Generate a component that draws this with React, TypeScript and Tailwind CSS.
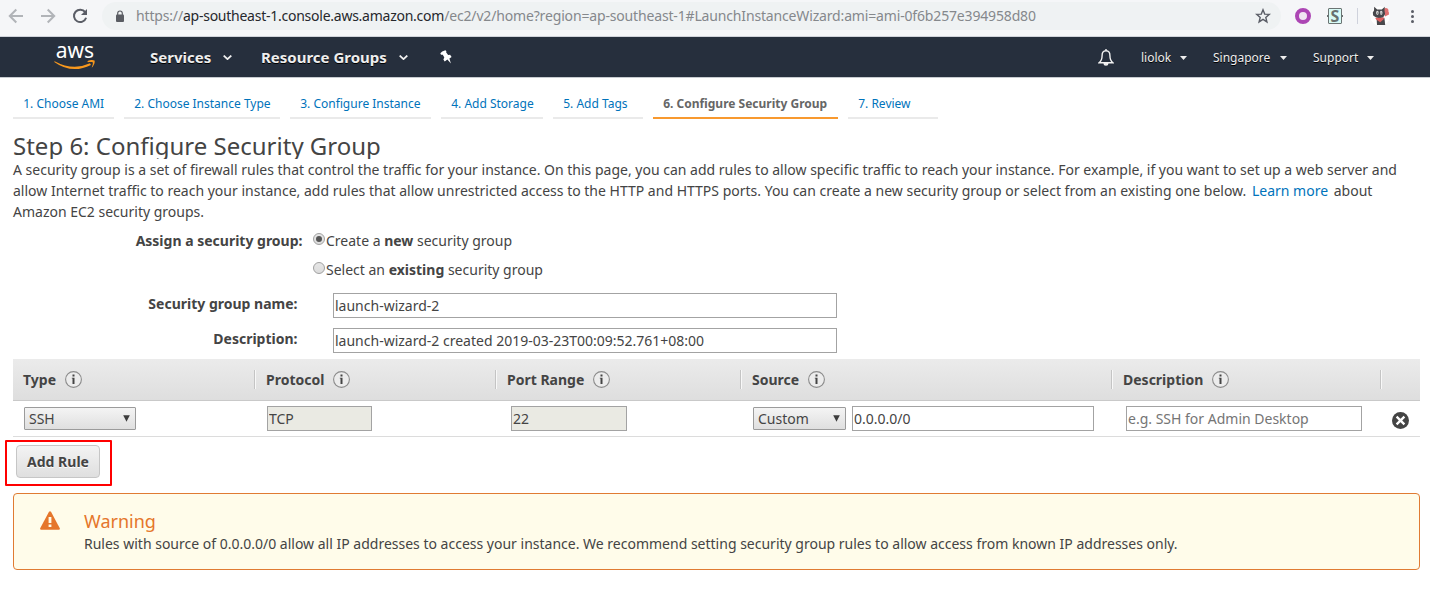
import React from 'react';

const tabs = [
  { label: '1. Choose AMI', width: 'w-[101px]' },
  { label: '2. Choose Instance Type', width: 'w-[156px]' },
  { label: '3. Configure Instance', width: 'w-[141px]' },
  { label: '4. Add Storage', width: 'w-[102px]' },
  { label: '5. Add Tags', width: 'w-[90px]' },
  { label: '6. Configure Security Group', width: 'w-[185px]', active: true },
  { label: '7. Review', width: 'w-[90px]' },
];

function BrowserBar() {
  return (
    <header className="flex h-[37px] shrink-0 border-b border-[#d0d3da] bg-[#f5f6f8]">
      <div className="flex h-8 w-[102px] shrink-0 items-center">
        <svg className="ml-2 h-4 w-4" viewBox="0 0 16 16" fill="none" stroke="#b1b4b8" strokeWidth="2">
          <path d="M15 8H2M8.3 1.5L1.8 8l6.5 6.5" />
        </svg>
        <svg className="ml-4 h-4 w-4" viewBox="0 0 16 16" fill="none" stroke="#b1b4b8" strokeWidth="2">
          <path d="M1 8h13M7.7 1.5L14.2 8l-6.5 6.5" />
        </svg>
        <svg className="ml-4 h-4 w-4" viewBox="0 0 16 16" fill="none" stroke="#5a5d66" strokeWidth="2">
          <path d="M13.2 4.2A6.2 6.2 0 1 0 14.1 9.8" />
          <path d="M15 1v6H9z" fill="#5a5d66" stroke="none" />
        </svg>
      </div>
      <div className="mt-0.5 flex h-7 w-[1179px] items-center rounded-full bg-[#eff2f3]">
        <svg className="ml-3.5 h-[13px] w-2 shrink-0" viewBox="0 0 8 13">
          <rect x="0" y="4.5" width="8" height="7.5" rx="1" fill="#5a5d63" />
          <path d="M1.7 5V3.3a2.3 2.3 0 0 1 4.6 0V5" fill="none" stroke="#5a5d63" strokeWidth="1.2" />
        </svg>
        <div className="ml-3 grow whitespace-nowrap text-[14px] leading-7 tracking-[-0.16px] text-[#85888c]">
          https://<span className="tracking-[-0.25px] text-[#26282c]">ap-southeast-1.console.aws.amazon.com</span>
          /ec2/v2/home?region=ap-southeast-1#LaunchInstanceWizard:ami=ami-0f6b257e394958d80
        </div>
        <svg className="mr-[10px] h-4 w-4 shrink-0" viewBox="0 0 16 16" fill="none" stroke="#5a5d66" strokeWidth="1.4">
          <path d="M8 1.8l1.7 4.3 4.6.3-3.5 3 1.1 4.5L8 11.4l-3.9 2.5 1.1-4.5-3.5-3 4.6-.3z" />
        </svg>
      </div>
      <div className="flex h-8 items-center">
        <span className="ml-3.5 h-4 w-4 rounded-full border-4 border-[#ac46b4] bg-[#f0e6f2]" />
        <div className="ml-4 flex h-4 w-4 items-center justify-center">
          <div className="relative flex h-4 w-3.5 items-center justify-center rounded-[1px] border border-[#6b7473] bg-[#d8faf5] text-[16px] font-bold leading-4 text-[#68706f]">
            S
            <span className="absolute -left-[2px] top-[6px] h-[2px] w-[2px] bg-[#6b7473]" />
            <span className="absolute -right-[2px] top-[6px] h-[2px] w-[2px] bg-[#6b7473]" />
          </div>
        </div>
        <span className="ml-[14px] h-4 w-px bg-[#cfd2dc]" />
        <svg className="ml-3 h-5 w-5" viewBox="0 0 20 20">
          <circle cx="10" cy="10" r="9.8" fill="#fff" />
          <circle cx="15.8" cy="4.6" r="2.6" fill="#e07070" />
          <path d="M14 7l4.8-1.6.2 3.2-4 2z" fill="#e07070" />
          <path d="M4.2.8l3 2.6h4.6L14.8.8l-.3 3.8.6 3.4-2 3.4-3.4.8-3.6-.8L3.2 9.6 2.8 6.4 4 4.6z" fill="#48484c" />
          <ellipse cx="7.4" cy="6.8" rx="1.3" ry="2.1" fill="#ddd" />
          <ellipse cx="11.2" cy="6.8" rx="1.3" ry="2.1" fill="#ddd" />
          <circle cx="7.6" cy="7" r=".6" fill="#444" />
          <circle cx="11" cy="7" r=".6" fill="#444" />
          <path d="M6.6 12h7.8l.8 7H7z" fill="#48484c" />
          <path d="M5.2 12l9.2-.6-1 2-3.2 2.8-4-2.6z" fill="#df6060" />
        </svg>
        <div className="ml-[21px] flex w-[3px] flex-col gap-0.5">
          <span className="h-[3px] w-[3px] rounded-full bg-[#5a5d66]" />
          <span className="h-[3px] w-[3px] rounded-full bg-[#5a5d66]" />
          <span className="h-[3px] w-[3px] rounded-full bg-[#5a5d66]" />
        </div>
      </div>
    </header>
  );
}

function Chevron({ className }: { className: string }) {
  return (
    <svg className={`h-[5px] w-[9px] shrink-0 ${className}`} viewBox="0 0 9 5" fill="none" stroke="#f0f0f0" strokeWidth="1.8">
      <path d="M.7.6l3.8 3.5L8.3.6" />
    </svg>
  );
}

function Caret({ className }: { className: string }) {
  return (
    <svg className={`mt-px h-1 w-[7px] shrink-0 ${className}`} viewBox="0 0 7 4" fill="#eee">
      <path d="M0 0h7L3.5 4z" />
    </svg>
  );
}

function NavBar() {
  return (
    <nav className="flex h-[41px] shrink-0 items-center border-b border-[#c7cbd0] bg-[#262f3d] text-[#eee] [text-shadow:0_1px_0_#000]">
      <div className="ml-[54px] flex h-10 w-[42px] shrink-0 flex-col">
        <span className="mt-[3px] h-5 text-center text-[21px] leading-5 text-white [text-shadow:none]">aws</span>
        <svg className="h-[10px] w-[42px]" viewBox="0 0 42 10">
          <path d="M.6 1.2Q19 11.2 36 3.3l1 1.6Q18 14.5.2 1.9z" fill="#f8981d" />
          <path d="M33.5 1.2c3-1.4 5.6-1.3 7-.6.8 1.9-.7 5.2-2.8 7.2.5-2.2 1.6-4.3 1-5.5-1-.6-3-.4-5 0z" fill="#f8981d" />
        </svg>
      </div>
      <span className="ml-[54px] w-[62px] whitespace-nowrap text-[15px] font-bold">Services</span>
      <Chevron className="ml-[11px]" />
      <span className="ml-[29px] w-[127px] whitespace-nowrap text-[15px] font-bold">Resource Groups</span>
      <Chevron className="ml-[11px]" />
      <svg className="ml-[32px] h-[14px] w-3 shrink-0" viewBox="0 0 12 14" fill="#fff">
        <path d="M2.2 1.5L5.4.2l1 1-.3 1.1 2 2.6 2-.1 1.5 2.1-2.2 1.6 1.5 4.9L7.4 9.6l-2.7 1.9-1.3-2 .9-1.9-1.5-2.8L1 4.7.3 3.2z" />
      </svg>
      <svg className="ml-[646px] h-[17px] w-4 shrink-0" viewBox="0 0 16 17" fill="none" stroke="#f2f2f2" strokeWidth="1.4">
        <path d="M8 1.8C5 1.8 4.1 4 4.1 6.5c0 4-.8 5.5-3 7.3h13.8c-2.2-1.8-3-3.3-3-7.3C11.9 4 11 1.8 8 1.8zM8 0v2" />
        <path d="M6.2 14.3a1.8 1.8 0 0 0 3.6 0z" fill="#f2f2f2" />
      </svg>
      <span className="ml-[27px] mt-0.5 w-[31px] whitespace-nowrap text-[12px]">liolok</span>
      <Caret className="ml-[8px]" />
      <span className="ml-[26px] mt-0.5 w-[58px] whitespace-nowrap text-[12px]">Singapore</span>
      <Caret className="ml-[9px]" />
      <span className="ml-[26px] mt-0.5 w-[46px] whitespace-nowrap text-[12px]">Support</span>
      <Caret className="ml-[8px]" />
    </nav>
  );
}

function InfoIcon() {
  return (
    <svg className="h-[17px] w-[17px] shrink-0" viewBox="0 0 17 17">
      <circle cx="8.5" cy="8.5" r="7.9" fill="#ececec" stroke="#8c8c8c" strokeWidth="1.1" />
      <path d="M7.5 3.5h2v2h-2zM6.8 6.7h2.7v6.3h-2V7.6h-.7z" fill="#444" />
    </svg>
  );
}

function HeaderCell({ label, first }: { label?: string; first?: boolean }) {
  return (
    <div className={first ? 'flex items-center pl-2.5' : 'flex items-center'}>
      {!first && <span className="mr-2.5 h-[19px] w-0.5 border-l border-r border-l-[#c4c4c4] border-r-[#f8f8f8]" />}
      {label && <span className="mr-[8.9px] whitespace-nowrap font-bold">{label}</span>}
      {label && <InfoIcon />}
    </div>
  );
}

function TextField({ value, placeholder, className }: { value?: string; placeholder?: string; className: string }) {
  return (
    <input
      className={`block h-[25px] border border-[#a3a3a3] px-px text-[14px] leading-[21px] text-[#444] outline-none placeholder:text-[#757575] ${className}`}
      defaultValue={value}
      placeholder={placeholder}
    />
  );
}

function SelectBox({ value, className }: { value: string; className: string }) {
  return (
    <div className={`flex h-[23px] items-center justify-between rounded-[1px] border border-[#9b9b9b] bg-linear-to-b from-[#f4f4f4] to-[#dfdfdf] pl-1 pr-[5px] ${className}`}>
      <span>{value}</span>
      <svg className="mb-px h-[7px] w-[7px]" viewBox="0 0 7 7" fill="#3c3c3c">
        <path d="M.2.3h6.6L3.5 6.8z" />
      </svg>
    </div>
  );
}

function Radio({ checked }: { checked?: boolean }) {
  return (
    <span className="mb-[3px] flex h-3 w-3 shrink-0 items-center justify-center rounded-full border border-[#a0a0a0] bg-linear-to-b from-[#e6e6e6] to-[#dcdcdc]">
      {checked && <span className="h-1.5 w-1.5 rounded-full bg-[#555]" />}
    </span>
  );
}

const columns = 'grid grid-cols-[241px_241px_245px_371px_269px_40px]';

export default function App() {
  return (
    <div className="flex h-[609px] w-[1430px] flex-col overflow-hidden bg-white font-['Noto_Sans',sans-serif] text-[14px] text-[#444]">
      <BrowserBar />
      <NavBar />
      <main className="flex flex-col pl-[13px] pr-2.5">
        <div className="mt-[13px] flex gap-2.5 text-[12px]">
          {tabs.map((t) => (
            <div
              key={t.label}
              className={`h-7 whitespace-nowrap border-b-2 pl-[10.2px] leading-[25px] ${t.width} ${
                t.active ? 'border-[#f8992f] font-bold text-[#666]' : 'border-[#eaeaea] text-[#0073bb]'
              }`}
            >
              {t.label}
            </div>
          ))}
        </div>
        <h1 className="mt-[13px] h-[27px] overflow-hidden whitespace-nowrap text-[24px] leading-[27px]">
          Step 6: Configure Security Group
        </h1>
        <p className="whitespace-nowrap leading-[21px]">
          A security group is a set of firewall rules that control the traffic for your instance. On this page, you can add rules to allow specific traffic to reach your instance. For example, if you want to set up a web server and
          <br />
          allow Internet traffic to reach your instance, add rules that allow unrestricted access to the HTTP and HTTPS ports. You can create a new security group or select from an existing one below.{' '}
          <span className="mx-0.5 text-[#0073bb]">Learn more</span> about
          <br />
          Amazon EC2 security groups.
        </p>
        <div className="mt-2 flex h-[21px] items-center">
          <span className="mr-2.5 w-[290px] whitespace-nowrap pr-[0.5px] text-right font-bold">Assign a security group:</span>
          <Radio checked />
          <span className="ml-px">Create a <b>new</b> security group</span>
        </div>
        <div className="mt-2 flex h-[21px] items-center pl-[300px]">
          <Radio />
          <span className="ml-px">Select an <b>existing</b> security group</span>
        </div>
        <div className="mt-[13px] flex">
          <span className="mr-[35px] w-[285px] pr-[0.5px] text-right font-bold leading-[21px]">Security group name:</span>
          <TextField value="launch-wizard-2" className="w-[504px] bg-white" />
        </div>
        <div className="mt-2.5 flex">
          <span className="mr-[35px] w-[285px] pr-[0.5px] text-right font-bold leading-[21px]">Description:</span>
          <TextField value="launch-wizard-2 created 2019-03-23T00:09:52.761+08:00" className="w-[504px] bg-white" />
        </div>

        <div className={`${columns} mt-1.5 h-[42px] border-b border-[#c9c9c9] bg-linear-to-b from-[#ebebeb] to-[#dedede]`}>
          <HeaderCell label="Type" first />
          <HeaderCell label="Protocol" />
          <HeaderCell label="Port Range" />
          <HeaderCell label="Source" />
          <HeaderCell label="Description" />
          <HeaderCell />
        </div>
        <div className={`${columns} h-9 items-center border-b border-[#dcdcdc]`}>
          <SelectBox value="SSH" className="ml-[11px] w-28" />
          <TextField value="TCP" className="ml-[13px] w-[105px] bg-[#eaeae3]" />
          <TextField value="22" className="ml-4 w-[116px] bg-[#eaeae3]" />
          <div className="flex items-center">
            <SelectBox value="Custom" className="ml-[13px] mr-1.5 w-[93px]" />
            <TextField value="0.0.0.0/0" className="w-[242px] bg-white" />
          </div>
          <TextField placeholder="e.g. SSH for Admin Desktop" className="ml-[15px] w-[236px] bg-white" />
          <svg className="ml-3 mt-[3px] h-[17px] w-[17px]" viewBox="0 0 17 17">
            <circle cx="8.5" cy="8.5" r="8.5" fill="#444" />
            <path d="M4.6 4.6l7.8 7.8M12.4 4.6l-7.8 7.8" stroke="#fff" strokeWidth="2.3" />
          </svg>
        </div>

        <div className="relative mt-2 flex h-12">
          <button className="ml-[3px] h-[33px] w-[84px] rounded-[4px] border border-[#c6c6c6] bg-linear-to-b from-[#f3f3f3] to-[#dfdfdf] font-bold [text-shadow:0_1px_0_#fff]">
            Add Rule
          </button>
          <div className="pointer-events-none absolute -left-2 -top-[5px] h-[46px] w-[107px] rounded-[1px] border-2 border-[#ff0000]" />
        </div>

        <section className="flex h-[77px] w-[1407px] rounded-[4px] border border-[#e07b33] bg-[#fffcea]">
          <svg className="ml-[26px] mt-[17px] h-[19px] w-5 shrink-0" viewBox="0 0 20 19">
            <path d="M9 .8q1-1.3 2 0l8.8 16.5q.4 1.4-1 1.4H1.2q-1.4 0-1-1.4z" fill="#e5762b" />
            <path d="M8.6 6h2.8v6H8.6zM8.6 13.4h2.8V16H8.6z" fill="#fffcea" />
          </svg>
          <div className="ml-6 mt-[15px]">
            <h2 className="text-[18px] leading-[25px] text-[#e5762b]">Warning</h2>
            <p className="-mt-px whitespace-nowrap leading-[21px]">
              Rules with source of 0.0.0.0/0 allow all IP addresses to access your instance. We recommend setting security group rules to allow access from known IP addresses only.
            </p>
          </div>
        </section>
      </main>
    </div>
  );
}
